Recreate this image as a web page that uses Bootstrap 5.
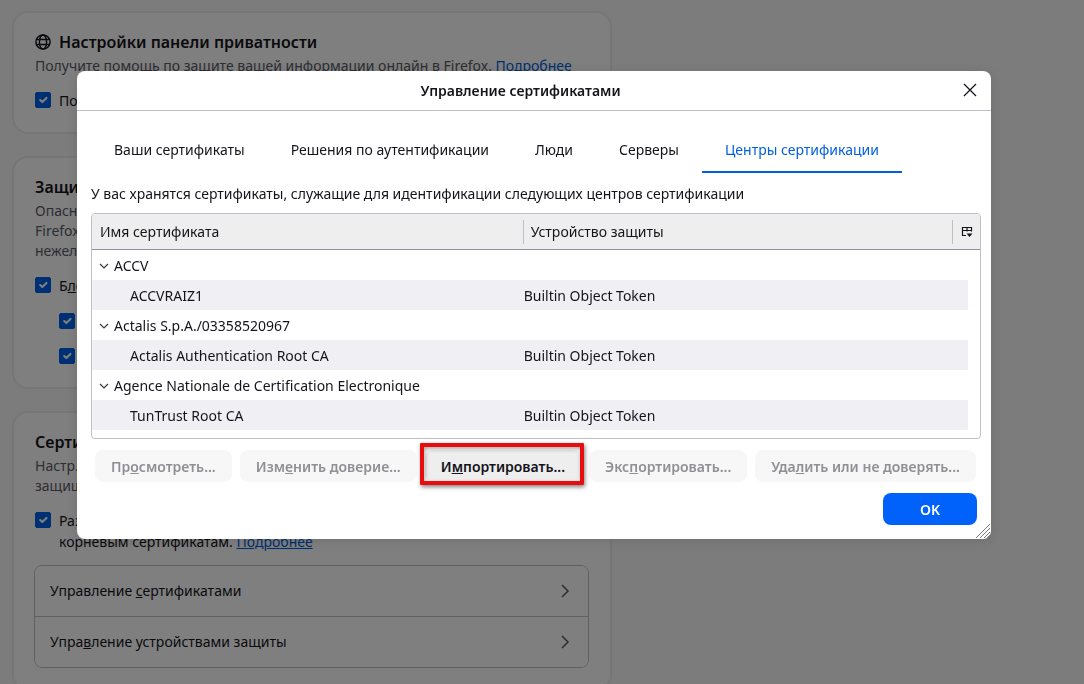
<!DOCTYPE html>
<html lang="ru">
<head>
<meta charset="utf-8">
<meta name="viewport" content="width=device-width, initial-scale=1">
<title>Управление сертификатами</title>
<link href="https://cdn.jsdelivr.net/npm/bootstrap@5.3.0/dist/css/bootstrap.min.css" rel="stylesheet">
<style>
  body { font-family: "Noto Sans", "Open Sans", sans-serif; font-size: 14px; line-height: 20px; color: #15141a; background: #f9f9fb; }
  a { color: #0060df; }
  .settings { max-width: 600px; margin-left: 12px; padding-top: 11px; }
  .pane { background: #fff; border: 2px solid #ededf2; border-radius: 16px; padding: 17px 21px 21px; margin-bottom: 22px; }
  .pane h2 { font-size: 16px; line-height: 24px; font-weight: 600; margin: 0 0 2px; }
  .pane .hint { color: #5b5b66; margin: 0 0 14px; }
  .pane .form-check { display: flex; gap: 8px; padding: 0; margin: 0; min-height: 20px; line-height: 21px; }
  .pane .form-check + .form-check { margin-top: 15px; }
  .form-check .form-check-input { float: none; flex: none; width: 16px; height: 16px; margin: 2px 0 0; border-radius: 2px; }
  .form-check-input:checked { background-color: #0061e8; border-color: #0061e8; }
  .links { border: 1px solid #bfbfc9; border-radius: 8px; overflow: hidden; margin: 13px 0 0 -1px; }
  .links button { height: 50px; padding: 0 15px; border: 0; background: #fff; color: inherit; width: 100%; }
  .links button + button { height: 51px; border-top: 1px solid #bfbfc9; }

  .modal { background: rgba(0, 0, 0, .5); padding-right: 16px; }
  .modal-dialog { max-width: 914px; margin: 71px auto 0; }
  .modal-content { border: 0; border-radius: 8px; color: #15141a; box-shadow: 0 2px 14px rgba(0, 0, 0, .12); }
  .modal-header { height: 40px; padding: 0 13px 0 2px; border-bottom: 1px solid #bfbfc9; }
  .modal-title { font-size: 14px; line-height: 20px; font-weight: 600; }
  .modal-header button { border: 0; background: none; padding: 0; width: 16px; height: 16px; line-height: 0; }
  .modal-body { padding: 16px 10px 14px 14px; }
  .tabs .nav-link { height: 46px; padding: 2px 23px 0; border: 0; border-bottom: 2px solid transparent; border-radius: 0; color: inherit; background: none; }
  .tabs .nav-link.active { color: #0060df; border-color: #0060df; }
  .about { margin: 11px 0 9px; }
  .tree { border: 1px solid #bfbfc9; border-radius: 4px; overflow: hidden; padding-bottom: 8px; }
  .tree table { width: 100%; table-layout: fixed; margin: 0; }
  .tree th { height: 35px; padding: 2px 8px 0; font-weight: 400; background: #eee; border-bottom: 1px solid #8f8f9d; vertical-align: middle; }
  .tree th span { display: block; margin-left: -8px; padding-left: 7px; line-height: 24px; border-left: 1px solid #bfbfc9; }
  .tree th svg { display: inline-block; margin-left: 1px; vertical-align: -1px; }
  .tree td { height: 30px; padding: 2px 1px 0; }
  .tree tbody tr:first-child td { padding-top: 3px; height: 31px; }
  .tree .group { padding-left: 7px; }
  .tree .leaf td { background: #f0f0f4; }
  .tree .leaf td:first-child { padding-left: 38px; }
  .tree .leaf td:last-child { background: linear-gradient(#f0f0f4, #f0f0f4) 0 0 / calc(100% - 12px) 100% no-repeat; }
  .tree .twisty { width: 10px; height: 10px; margin-right: 5px; vertical-align: 0; }
  .actions { gap: 8px; padding: 11px 4px; }
  .act { height: 32px; padding: 1px 16px 0; border: 0; border-radius: 8px; font-weight: 600; color: #15141a; background: #eee; white-space: nowrap; }
  .act:disabled { color: #8f8f94; background: #f7f7f8; }
  .act-ok { width: 94px; background: #0061fb; color: #fff; margin-right: 4px; }
  .marker { position: absolute; inset: -7px -3px -3px -5px; border: 4px solid #e80c0c; border-radius: 1px; box-shadow: 1px 2px 4px rgba(0, 0, 0, .5), inset 1px 2px 4px rgba(0, 0, 0, .35); pointer-events: none; }
  .grip { position: absolute; right: 0; bottom: 0; width: 16px; height: 16px; }
</style>
</head>
<body>
<div class="vh-100 overflow-hidden">
<main class="settings">
  <section class="pane">
    <h2 class="d-flex align-items-center gap-2">
      <svg width="16" height="16" viewBox="0 0 16 16" fill="none" stroke="currentColor" stroke-width="1.5"><circle cx="8" cy="8" r="7.1"/><ellipse cx="8" cy="8" rx="3.6" ry="7.1"/><path d="M1.5 5.5h13M1.5 10.5h13"/></svg>
      Настройки панели приватности
    </h2>
    <p class="hint">Получите помощь по защите вашей информации онлайн в Firefox. <a href="#">Подробнее</a></p>
    <div class="form-check"><input class="form-check-input" type="checkbox" id="c1" checked><label for="c1">Показ</label></div>
  </section>
  <section class="pane">
    <h2>Защита</h2>
    <p class="hint">Опасное<br>Firefox<br>нежелат.</p>
    <div class="form-check"><input class="form-check-input" type="checkbox" id="c2" checked><label for="c2">Б<u>л</u>ок</label></div>
    <div class="form-check ms-4"><input class="form-check-input" type="checkbox" id="c3" checked aria-label="Опасные загрузки"></div>
    <div class="form-check ms-4"><input class="form-check-input" type="checkbox" id="c4" checked aria-label="Нежелательные программы"></div>
  </section>
  <section class="pane">
    <h2>Сертиф.</h2>
    <p class="hint">Настр.<br>защищ.</p>
    <div class="form-check"><input class="form-check-input" type="checkbox" id="c5" checked><label for="c5">Разр.<br>корневым сертификатам. <a href="#">Подробнее</a></label></div>
    <div class="links">
      <button type="button" class="d-flex align-items-center justify-content-between"><span>Управление <u>с</u>ертификатами</span><svg width="16" height="16" viewBox="0 0 16 16" fill="none" stroke="#5b5b66" stroke-width="1.5"><path d="M5 2l6 6-6 6"/></svg></button>
      <button type="button" class="d-flex align-items-center justify-content-between"><span>Упра<u>в</u>ление устройствами защиты</span><svg width="16" height="16" viewBox="0 0 16 16" fill="none" stroke="#5b5b66" stroke-width="1.5"><path d="M5 2l6 6-6 6"/></svg></button>
    </div>
  </section>
</main>
</div>

<div class="modal d-block" role="dialog" aria-modal="true" aria-labelledby="dlg">
  <div class="modal-dialog">
    <div class="modal-content">
      <div class="modal-header">
        <h1 class="modal-title flex-fill text-center" id="dlg">Управление сертификатами</h1>
        <button type="button" aria-label="Закрыть"><svg width="16" height="16" viewBox="0 0 16 16" fill="none" stroke="#15141a" stroke-width="1.3"><path d="M2 1l12 12M14 1L2 13"/></svg></button>
      </div>
      <div class="modal-body">
        <div class="nav tabs flex-nowrap text-nowrap" role="tablist">
          <button type="button" role="tab" class="nav-link">Ваши сертификаты</button>
          <button type="button" role="tab" class="nav-link">Решения по аутентификации</button>
          <button type="button" role="tab" class="nav-link">Люди</button>
          <button type="button" role="tab" class="nav-link">Серверы</button>
          <button type="button" role="tab" class="nav-link active" aria-selected="true">Центры сертификации</button>
        </div>
        <p class="about">У вас хранятся сертификаты, служащие для идентификации следующих центров сертификации</p>
        <div class="tree">
          <table>
            <colgroup><col style="width:48.5%"><col><col style="width:28px"></colgroup>
            <thead><tr><th scope="col">Имя сертификата</th><th scope="col"><span>Устройство защиты</span></th><th scope="col"><span class="text-nowrap"><svg width="12" height="12" viewBox="0 0 12 12" fill="none" stroke="#15141a" stroke-width="1.2"><path d="M5 9.500H1.500v-8h9v4M1.500 4.500h9M6 1.500v4"/><path d="M5.500 7.500h6l-3 3.500z" fill="#15141a" stroke="none"/></svg></span></th></tr></thead>
            <tbody>
              <tr><td class="group" colspan="3"><svg class="twisty" viewBox="0 0 10 10" fill="none" stroke="#3a3944" stroke-width="1.2"><path d="M1 3l4 4 4-4"/></svg>ACCV</td></tr>
              <tr class="leaf"><td>ACCVRAIZ1</td><td>Builtin Object Token</td><td></td></tr>
              <tr><td class="group" colspan="3"><svg class="twisty" viewBox="0 0 10 10" fill="none" stroke="#3a3944" stroke-width="1.2"><path d="M1 3l4 4 4-4"/></svg>Actalis S.p.A./03358520967</td></tr>
              <tr class="leaf"><td>Actalis Authentication Root CA</td><td>Builtin Object Token</td><td></td></tr>
              <tr><td class="group" colspan="3"><svg class="twisty" viewBox="0 0 10 10" fill="none" stroke="#3a3944" stroke-width="1.2"><path d="M1 3l4 4 4-4"/></svg>Agence Nationale de Certification Electronique</td></tr>
              <tr class="leaf"><td>TunTrust Root CA</td><td>Builtin Object Token</td><td></td></tr>
            </tbody>
          </table>
        </div>
        <div class="actions d-flex">
          <button type="button" class="act" disabled>Пр<u>о</u>смотреть...</button>
          <button type="button" class="act" disabled>Изм<u>е</u>нить доверие...</button>
          <div class="position-relative"><button type="button" class="act">И<u>м</u>портировать...</button><span class="marker"></span></div>
          <button type="button" class="act" disabled>Экс<u>п</u>ортировать...</button>
          <button type="button" class="act" disabled>Уда<u>л</u>ить или не доверять...</button>
        </div>
        <div class="d-flex justify-content-end"><button type="button" class="act act-ok">OK</button></div>
      </div>
      <svg class="grip" viewBox="0 0 16 16" stroke="#77777c" fill="none"><path d="M1 15L15 1M5 15L15 5M9 15l6-6M12 15l3-3"/></svg>
    </div>
  </div>
</div>
<script src="https://cdn.jsdelivr.net/npm/bootstrap@5.3.0/dist/js/bootstrap.bundle.min.js"></script>
</body>
</html>
